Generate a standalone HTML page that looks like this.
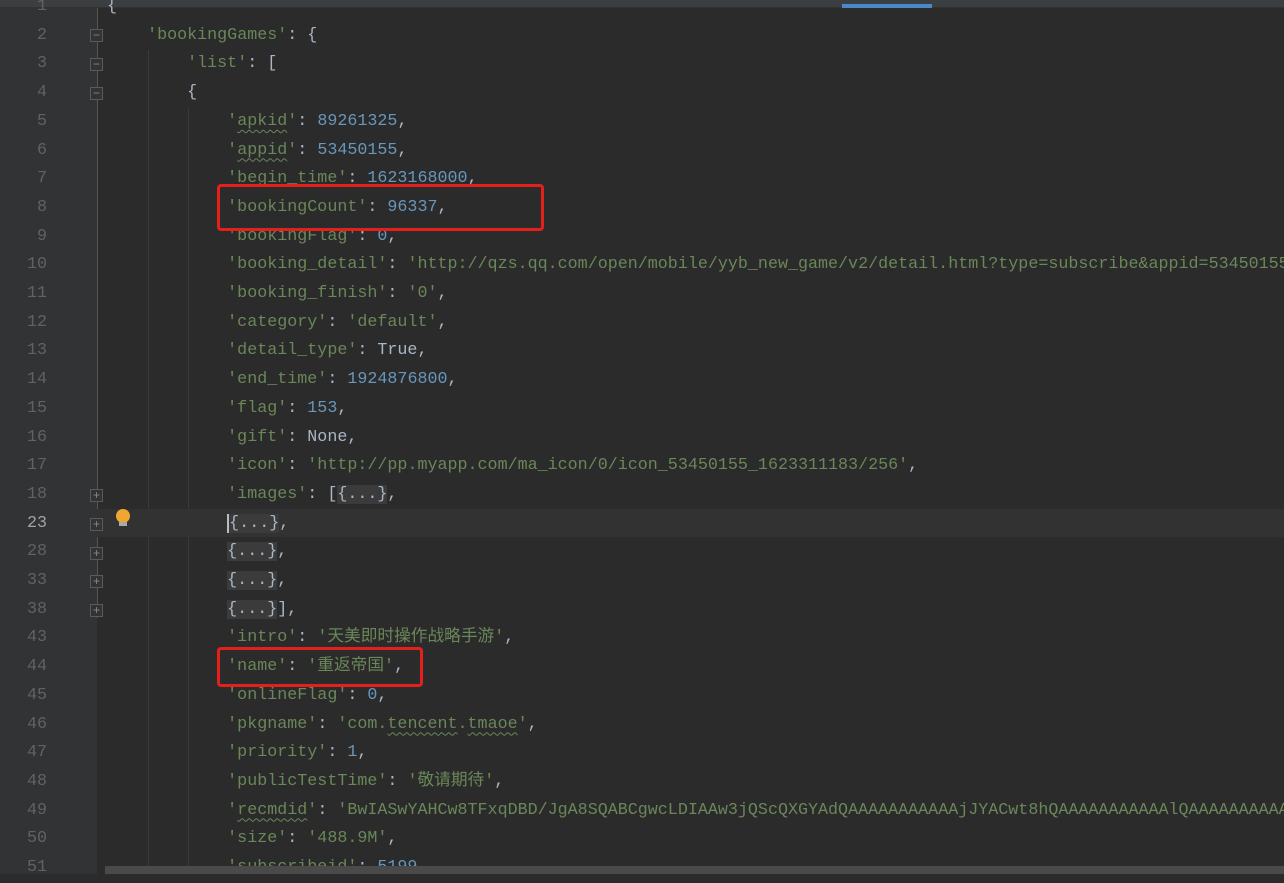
<!DOCTYPE html>
<html><head><meta charset="utf-8"><style>
body{margin:0;width:1284px;height:874px;overflow:hidden;background:#2b2b2b;position:relative;font-family:"Liberation Mono","Noto Sans CJK SC",monospace;font-size:16.7px;}
.gut{position:absolute;left:0;top:0;width:97px;height:874px;background:#313335;}
.top{position:absolute;left:0;top:0;width:1284px;height:7px;background:#3c3f41;border-bottom:1px solid #323232;}
.row{position:absolute;left:0;width:1284px;height:28.7px;line-height:28.7px;white-space:pre;}
.cur{background:#323232;}
.ln{position:absolute;left:0;width:47px;text-align:right;color:#606366;}
.code{position:absolute;left:107px;color:#a9b7c6;}
.k{color:#6a8759}.n{color:#6897bb}.s{color:#6a8759}
.f{background:#3b3b3b;}
.w{text-decoration:underline wavy #6a8759;text-decoration-thickness:1px;text-underline-offset:4px;}
.fold{position:absolute;left:90px;width:13px;height:13px;border:1px solid #5a5a5a;box-sizing:border-box;background:#313335;color:#888;font-size:12px;line-height:10px;text-align:center;font-family:"Liberation Sans",sans-serif;}
.box{position:absolute;border:3px solid #e3201b;border-radius:4px;box-sizing:border-box;}
.guide{position:absolute;width:1px;background:#3a3a3a;}
</style></head><body>
<div class="gut"></div>
<div class="top"></div>
<div style="position:absolute;left:842px;top:4px;width:90px;height:4px;background:#4a88c7"></div>
<div style="position:absolute;left:97px;top:8px;width:1px;height:610px;background:#555"></div>
<div class="guide" style="left:148px;top:50px;height:824px"></div>
<div class="guide" style="left:188px;top:108px;height:766px"></div>

<div class="row" style="top:-7px"><span class="ln">1</span><span class="code">{</span></div>
<div class="row" style="top:21.7px"><span class="ln">2</span><span class="code">    <span class="k">'bookingGames'</span>: {</span></div>
<div class="row" style="top:50.4px"><span class="ln">3</span><span class="code">        <span class="k">'list'</span>: [</span></div>
<div class="row" style="top:79.1px"><span class="ln">4</span><span class="code">        {</span></div>
<div class="row" style="top:107.8px"><span class="ln">5</span><span class="code">            <span class="k">'<span class="w">apkid</span>'</span>: <span class="n">89261325</span>,</span></div>
<div class="row" style="top:136.5px"><span class="ln">6</span><span class="code">            <span class="k">'<span class="w">appid</span>'</span>: <span class="n">53450155</span>,</span></div>
<div class="row" style="top:165.2px"><span class="ln">7</span><span class="code">            <span class="k">'begin_time'</span>: <span class="n">1623168000</span>,</span></div>
<div class="row" style="top:193.9px"><span class="ln">8</span><span class="code">            <span class="k">'bookingCount'</span>: <span class="n">96337</span>,</span></div>
<div class="row" style="top:222.6px"><span class="ln">9</span><span class="code">            <span class="k">'bookingFlag'</span>: <span class="n">0</span>,</span></div>
<div class="row" style="top:251.3px"><span class="ln">10</span><span class="code">            <span class="k">'booking_detail'</span>: <span class="s">'http://qzs.qq.com/open/mobile/yyb_new_game/v2/detail.html?type=subscribe&amp;appid=53450155'</span></span></div>
<div class="row" style="top:280px"><span class="ln">11</span><span class="code">            <span class="k">'booking_finish'</span>: <span class="s">'0'</span>,</span></div>
<div class="row" style="top:308.7px"><span class="ln">12</span><span class="code">            <span class="k">'category'</span>: <span class="s">'default'</span>,</span></div>
<div class="row" style="top:337.4px"><span class="ln">13</span><span class="code">            <span class="k">'detail_type'</span>: True,</span></div>
<div class="row" style="top:366.1px"><span class="ln">14</span><span class="code">            <span class="k">'end_time'</span>: <span class="n">1924876800</span>,</span></div>
<div class="row" style="top:394.8px"><span class="ln">15</span><span class="code">            <span class="k">'flag'</span>: <span class="n">153</span>,</span></div>
<div class="row" style="top:423.5px"><span class="ln">16</span><span class="code">            <span class="k">'gift'</span>: None,</span></div>
<div class="row" style="top:452.2px"><span class="ln">17</span><span class="code">            <span class="k">'icon'</span>: <span class="s">'http://pp.myapp.com/ma_icon/0/icon_53450155_1623311183/256'</span>,</span></div>
<div class="row" style="top:480.9px"><span class="ln">18</span><span class="code">            <span class="k">'images'</span>: [<span class="f">{...}</span>,</span></div>
<div class="row cur" style="top:508.6px;left:97px;width:1187px"></div>
<div class="row" style="top:509.6px"><span class="ln" style="color:#a4a3a3">23</span><span class="code">            <span class="f" style="border-left:2px solid #bbb">{...}</span>,</span></div>
<div class="row" style="top:538.3px"><span class="ln">28</span><span class="code">            <span class="f">{...}</span>,</span></div>
<div class="row" style="top:567px"><span class="ln">33</span><span class="code">            <span class="f">{...}</span>,</span></div>
<div class="row" style="top:595.7px"><span class="ln">38</span><span class="code">            <span class="f">{...}</span>],</span></div>
<div class="row" style="top:624.4px"><span class="ln">43</span><span class="code">            <span class="k">'intro'</span>: <span class="s">'天美即时操作战略手游'</span>,</span></div>
<div class="row" style="top:653.1px"><span class="ln">44</span><span class="code">            <span class="k">'name'</span>: <span class="s">'重返帝国'</span>,</span></div>
<div class="row" style="top:681.8px"><span class="ln">45</span><span class="code">            <span class="k">'onlineFlag'</span>: <span class="n">0</span>,</span></div>
<div class="row" style="top:710.5px"><span class="ln">46</span><span class="code">            <span class="k">'pkgname'</span>: <span class="s">'com.<span class="w">tencent</span>.<span class="w">tmaoe</span>'</span>,</span></div>
<div class="row" style="top:739.2px"><span class="ln">47</span><span class="code">            <span class="k">'priority'</span>: <span class="n">1</span>,</span></div>
<div class="row" style="top:767.9px"><span class="ln">48</span><span class="code">            <span class="k">'publicTestTime'</span>: <span class="s">'敬请期待'</span>,</span></div>
<div class="row" style="top:796.6px"><span class="ln">49</span><span class="code">            <span class="k">'<span class="w">recmdid</span>'</span>: <span class="s">'BwIASwYAHCw8TFxqDBD/JgA8SQABCgwcLDIAAw3jQScQXGYAdQAAAAAAAAAAAjJYACwt8hQAAAAAAAAAAAlQAAAAAAAAAAArL</span></span></div>
<div class="row" style="top:825.3px"><span class="ln">50</span><span class="code">            <span class="k">'size'</span>: <span class="s">'488.9M'</span>,</span></div>
<div class="row" style="top:854px"><span class="ln">51</span><span class="code">            <span class="k">'subscribeid'</span>: <span class="n">5199</span>,</span></div>

<div class="fold" style="top:29px">−</div>
<div class="fold" style="top:58px">−</div>
<div class="fold" style="top:87px">−</div>
<div class="fold" style="top:489px">+</div>
<div class="fold" style="top:518px">+</div>
<div class="fold" style="top:547px">+</div>
<div class="fold" style="top:575px">+</div>
<div class="fold" style="top:604px">+</div>

<div style="position:absolute;left:116px;top:509px;width:14px;height:14px;border-radius:50%;background:#f0a732"></div>
<div style="position:absolute;left:119px;top:522px;width:8px;height:4px;background:#aaa"></div>

<div class="box" style="left:217px;top:184px;width:327px;height:47px"></div>
<div class="box" style="left:217px;top:647px;width:206px;height:40px"></div>

<div style="position:absolute;left:105px;top:866px;width:1179px;height:8px;background:#4a4a4a"></div>
</body></html>
